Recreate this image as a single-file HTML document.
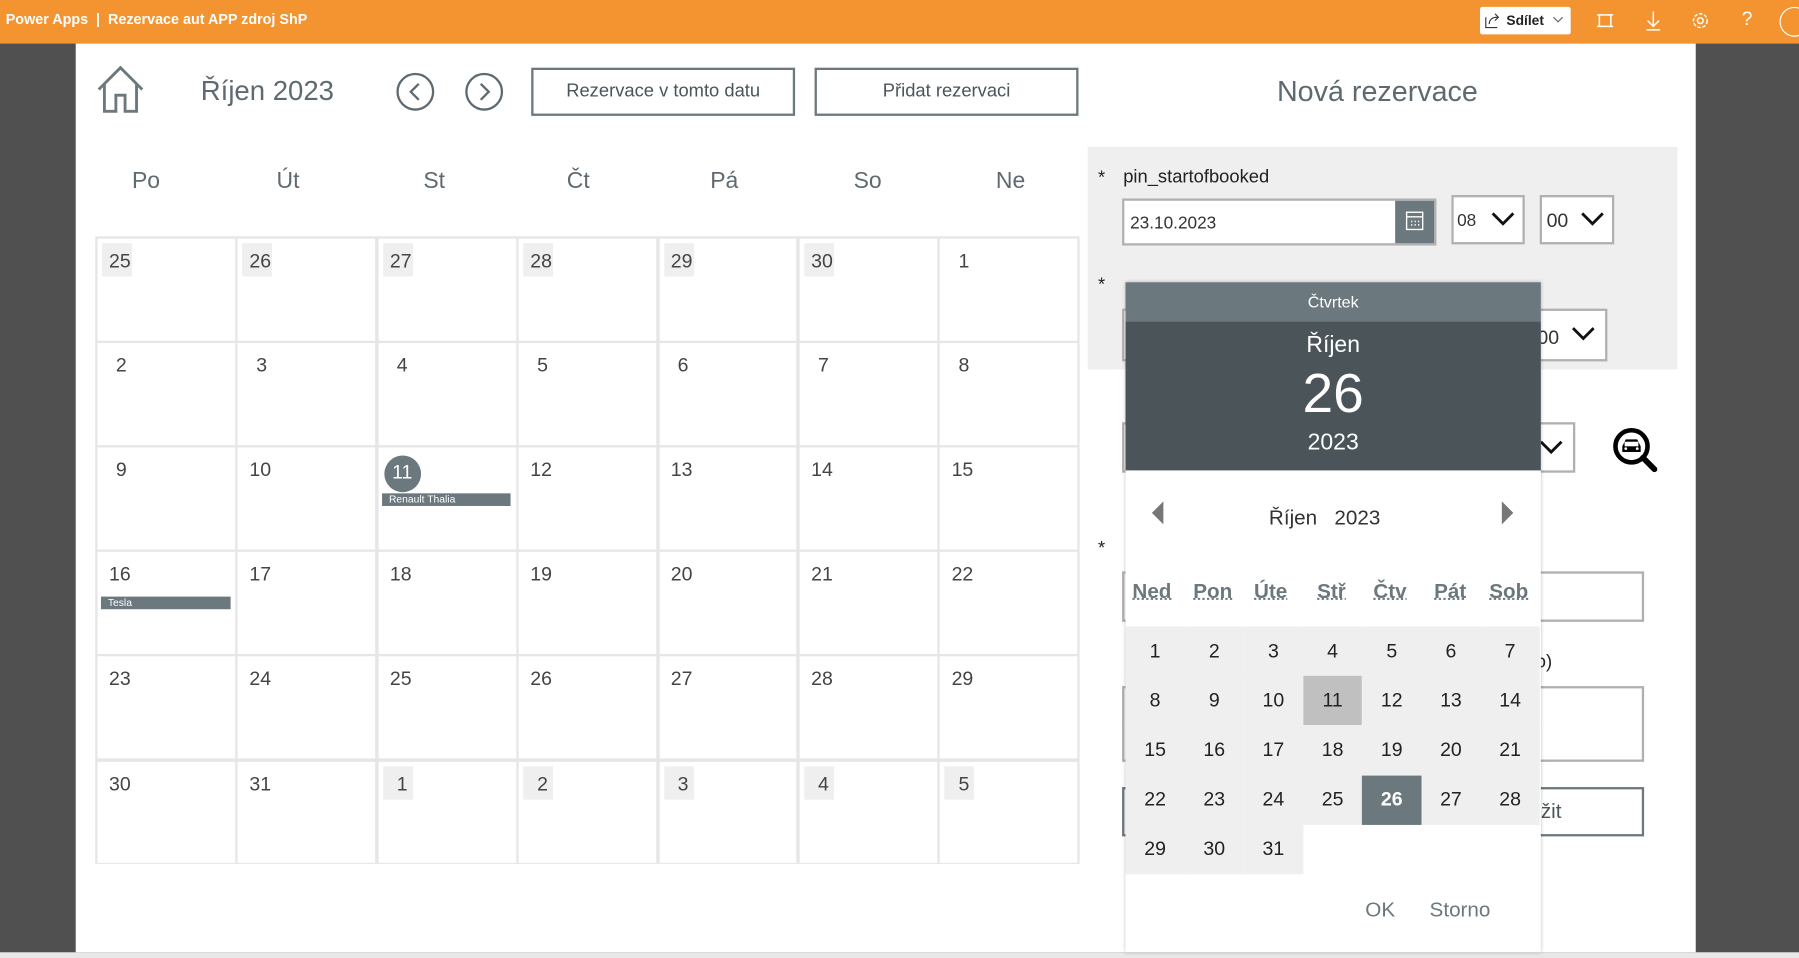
<!DOCTYPE html>
<html><head><meta charset="utf-8">
<style>
html,body{margin:0;padding:0;width:1799px;height:958px;overflow:hidden;background:#505050;}
#w{position:absolute;left:0;top:0;width:1568px;height:835px;transform:scale(1.14732);transform-origin:0 0;font-family:"Liberation Sans",sans-serif;background:#505050;}
.a{position:absolute;}
.t{position:absolute;white-space:nowrap;}
.c{color:#5f6a70;}
.btn{position:absolute;border:2px solid #6b787d;box-sizing:border-box;color:#4a555a;font-size:16px;display:flex;align-items:center;justify-content:center;background:#fff;}
.cell{position:absolute;box-sizing:border-box;background:#fff;}
.num{position:absolute;font-size:17px;color:#444;}
.og{background:#efefef;}
.pc{position:absolute;width:51.57px;height:43.2px;display:flex;align-items:center;justify-content:center;font-size:17px;color:#222;}
.dn{position:absolute;font-size:18px;font-weight:bold;color:#6b787d;text-decoration:underline dotted;}
.dd{position:absolute;background:#fff;border:2px solid #b0b0b0;box-sizing:border-box;}
</style></head><body><div id="w">
<div class="a" style="left:0;top:0;width:1568px;height:38px;background:#f39430"></div>
<div class="t" style="left:5px;top:10px;color:#fff;font-size:12.5px;font-weight:bold">Power Apps&nbsp; | &nbsp;Rezervace aut APP zdroj ShP</div>
<div class="a" style="left:1290px;top:6px;width:79px;height:24px;background:#fff;border-radius:2px"></div>
<svg class="a" style="left:1294px;top:11px" width="14" height="14" viewBox="0 0 14 14" fill="none" stroke="#333" stroke-width="1"><path d="M1 4v9h10"/><path d="M4 10c0-4 3-6 7-6M9 1l3 3-3 3"/></svg>
<div class="t" style="left:1313px;top:11px;font-size:12px;font-weight:bold;color:#222">Sdílet</div>
<svg class="a" style="left:1353px;top:13px" width="10" height="8"><path d="M1 2l4 4 4-4" stroke="#666" fill="none"/></svg>
<svg class="a" style="left:1391px;top:10px" width="16" height="16" fill="none" stroke="#fff" stroke-width="1.3"><rect x="3" y="3" width="10" height="10"/><path d="M1 3h4M11 3h4M1 13h4M11 13h4"/></svg>
<svg class="a" style="left:1434px;top:9px" width="14" height="18" fill="none" stroke="#fff" stroke-width="1.3"><path d="M7 1v13M2 9l5 5 5-5M1 17h12"/></svg>
<svg class="a" style="left:1474px;top:10px" width="16" height="16" fill="none" stroke="#fff" stroke-width="1.3"><circle cx="8" cy="8" r="2.5"/><circle cx="8" cy="8" r="6" stroke-dasharray="3 1.5"/></svg>
<div class="t" style="left:1518px;top:7px;color:#fff;font-size:17px">?</div>
<div class="a" style="left:1551px;top:6px;width:24px;height:24px;border:1.5px solid #fff;border-radius:50%"></div>

<div class="a" style="left:66px;top:38px;width:1412px;height:792px;background:#fff"></div>
<div class="a" style="left:0;top:830px;width:1568px;height:5px;background:#e8e8e8"></div>

<svg class="a" style="left:83px;top:56px" width="44" height="44" fill="none" stroke="#6b787d" stroke-width="2.5"><path d="M3 22L22 3l19 19M8 17v24h10V27h8v14h10V17"/></svg>
<div class="t c" style="left:175px;top:66px;font-size:24px">Říjen 2023</div>
<svg class="a" style="left:345px;top:63px" width="100" height="36" fill="none" stroke="#5f6a70" stroke-width="2"><circle cx="17" cy="17" r="15.5"/><path d="M20 10l-7 7 7 7"/><circle cx="77" cy="17" r="15.5"/><path d="M74 10l7 7-7 7"/></svg>
<div class="btn" style="left:463px;top:59px;width:230px;height:42px">Rezervace v tomto datu</div>
<div class="btn" style="left:710px;top:59px;width:230px;height:42px">Přidat rezervaci</div>
<div class="t c" style="left:1113px;top:66px;font-size:25px">Nová rezervace</div>

<div class="t c" style="left:115px;top:147px;font-size:20px">Po</div>
<div class="t c" style="left:241px;top:147px;font-size:20px">Út</div>
<div class="t c" style="left:369px;top:147px;font-size:20px">St</div>
<div class="t c" style="left:494px;top:147px;font-size:20px">Čt</div>
<div class="t c" style="left:619px;top:147px;font-size:20px">Pá</div>
<div class="t c" style="left:744px;top:147px;font-size:20px">So</div>
<div class="t c" style="left:868px;top:147px;font-size:20px">Ne</div>

<div class="a" style="left:83px;top:206px;width:858px;height:547px;background:#e6e6e6"></div>
<div id="grid"></div>

<div class="a" style="left:948px;top:128px;width:514px;height:194px;background:#efefef"></div>
<div class="t" style="left:957px;top:147px;font-size:16px;color:#222">*</div>
<div class="t" style="left:979px;top:146px;font-size:16px;color:#222">pin_startofbooked</div>
<div class="dd" style="left:978px;top:173px;width:274px;height:41px"></div>
<div class="t" style="left:985px;top:186px;font-size:15px;color:#333">23.10.2023</div>
<div class="a" style="left:1216px;top:175px;width:34px;height:37px;background:#6b787d"></div>
<svg class="a" style="left:1225px;top:184px" width="16" height="17" fill="none" stroke="#fff" stroke-width="1.2"><rect x="1" y="1" width="14" height="15"/><path d="M1 5h14"/><path d="M5 9h1M8 9h1M11 9h1M5 12h1M8 12h1M11 12h1" stroke-width="1.5"/></svg>
<div class="dd" style="left:1265px;top:170px;width:64px;height:43px"></div>
<div class="t" style="left:1270px;top:184px;font-size:15px;color:#333">08</div>
<svg class="a" style="left:1299px;top:184px" width="22" height="14"><path d="M2 2l9 9 9-9" stroke="#111" stroke-width="2.5" fill="none"/></svg>
<div class="dd" style="left:1342px;top:170px;width:65px;height:43px"></div>
<div class="t" style="left:1348px;top:183px;font-size:17px;color:#333">00</div>
<svg class="a" style="left:1377px;top:184px" width="22" height="14"><path d="M2 2l9 9 9-9" stroke="#111" stroke-width="2.5" fill="none"/></svg>
<div class="t" style="left:957px;top:240px;font-size:16px;color:#222">*</div>
<div class="dd" style="left:978px;top:269px;width:423px;height:46px"></div>
<div class="t" style="left:1340px;top:285px;font-size:17px;color:#333">00</div>
<svg class="a" style="left:1369px;top:284px" width="22" height="14"><path d="M2 2l9 9 9-9" stroke="#111" stroke-width="2.5" fill="none"/></svg>

<div class="dd" style="left:978px;top:368px;width:395px;height:44px"></div>
<svg class="a" style="left:1341px;top:383px" width="22" height="14"><path d="M2 2l9 9 9-9" stroke="#111" stroke-width="2.5" fill="none"/></svg>
<svg class="a" style="left:1404px;top:370px" width="44" height="44"><circle cx="18" cy="19" r="14" fill="none" stroke="#000" stroke-width="4"/><path d="M28 29l10 10" stroke="#000" stroke-width="5" stroke-linecap="round"/><path d="M10 24v-5l3-6h10l3 6v5z" fill="#000"/><rect x="12" y="15" width="12" height="4" fill="#fff"/><circle cx="13" cy="21" r="1.2" fill="#fff"/><circle cx="23" cy="21" r="1.2" fill="#fff"/></svg>
<div class="t" style="left:957px;top:470px;font-size:16px;color:#222">*</div>
<div class="dd" style="left:978px;top:498px;width:455px;height:44px"></div>
<div class="t" style="left:1311px;top:569px;font-size:16px;color:#222">(auto)</div>
<div class="dd" style="left:978px;top:598px;width:455px;height:66px"></div>
<div class="btn" style="left:978px;top:686px;width:455px;height:43px;justify-content:flex-end;padding-right:70px;font-size:18px">Uložit</div>

<div class="a" style="left:981px;top:246px;width:362px;height:584px;background:#fff;box-shadow:0 0 3px rgba(0,0,0,.25)"></div>
<div class="a" style="left:981px;top:246px;width:362px;height:34px;background:#6b787d;color:#fff;font-size:14px;text-align:center;line-height:34px">Čtvrtek</div>
<div class="a" style="left:981px;top:280px;width:362px;height:130px;background:#4a5459;color:#fff;text-align:center">
<div style="position:absolute;top:10px;width:100%;font-size:20px">Říjen</div>
<div style="position:absolute;top:36px;width:100%;font-size:48px">26</div>
<div style="position:absolute;top:95px;width:100%;font-size:20px">2023</div>
</div>
<svg class="a" style="left:1002px;top:436px" width="14" height="22"><path d="M12 1L2 11l10 10z" fill="#777"/></svg>
<svg class="a" style="left:1307px;top:436px" width="14" height="22"><path d="M2 1l10 10-10 10z" fill="#777"/></svg>
<div class="t" style="left:1106px;top:441px;font-size:18px;color:#333">Říjen&nbsp;&nbsp;&nbsp;2023</div>
<div class="dn" style="left:987px;top:505px">Ned</div>
<div class="dn" style="left:1040px;top:505px">Pon</div>
<div class="dn" style="left:1093px;top:505px">Úte</div>
<div class="dn" style="left:1148px;top:505px">Stř</div>
<div class="dn" style="left:1197px;top:505px">Čtv</div>
<div class="dn" style="left:1250px;top:505px">Pát</div>
<div class="dn" style="left:1298px;top:505px">Sob</div>
<div id="pg"></div>
<div class="t" style="left:1190px;top:783px;font-size:18px;color:#6b787d">OK</div>
<div class="t" style="left:1246px;top:783px;font-size:18px;color:#6b787d">Storno</div>
</div>
<script>
(function(){
var g=document.getElementById('grid'),h='';
var d=[25,26,27,28,29,30,1,2,3,4,5,6,7,8,9,10,11,12,13,14,15,16,17,18,19,20,21,22,23,24,25,26,27,28,29,30,31,1,2,3,4,5];
var cw=122.4,ch=91.1;
for(var i=0;i<42;i++){var r=Math.floor(i/7),c=i%7;var x=85+c*cw,y=208+r*ch;
var out=(i<6)||(i>=37);
h+='<div class="cell" style="left:'+x+'px;top:'+y+'px;width:'+(cw-2.5)+'px;height:'+(ch-2.5)+'px"></div>';
if(out)h+='<div class="a og" style="left:'+(x+4)+'px;top:'+(y+4)+'px;width:26px;height:29px"></div>';
if(i==16){h+='<div class="a" style="left:'+(x+5)+'px;top:'+(y+7)+'px;width:32px;height:32px;border-radius:50%;background:#6b787d"></div>';
h+='<div class="num" style="left:'+(x+12)+'px;top:'+(y+12)+'px;color:#fff">11</div>';}
else h+='<div class="num" style="left:'+(x+(d[i]<10?16:10))+'px;top:'+(y+10)+'px">'+d[i]+'</div>';
}
h+='<div class="a" style="left:333px;top:430px;width:112px;height:11px;background:#6b787d;color:#fff;font-size:9px;line-height:11px;padding-left:6px;box-sizing:border-box">Renault Thalia</div>';
h+='<div class="a" style="left:88px;top:520px;width:113px;height:11px;background:#6b787d;color:#fff;font-size:9px;line-height:11px;padding-left:6px;box-sizing:border-box">Tesla</div>';
g.innerHTML=h;
var p=document.getElementById('pg'),s='';
for(var k=1;k<=31;k++){var j=k-1,r=Math.floor(j/7),c=j%7;var bg='#efefef',col='#222',fw='normal';
if(k==11)bg='#c0c0c0';if(k==26){bg='#6b787d';col='#fff';fw='bold';}
s+='<div class="pc" style="left:'+(981+c*51.57)+'px;top:'+(546+r*43.2)+'px;background:'+bg+';color:'+col+';font-weight:'+fw+'">'+k+'</div>';}
p.innerHTML=s;
})();
</script>
</body></html>
